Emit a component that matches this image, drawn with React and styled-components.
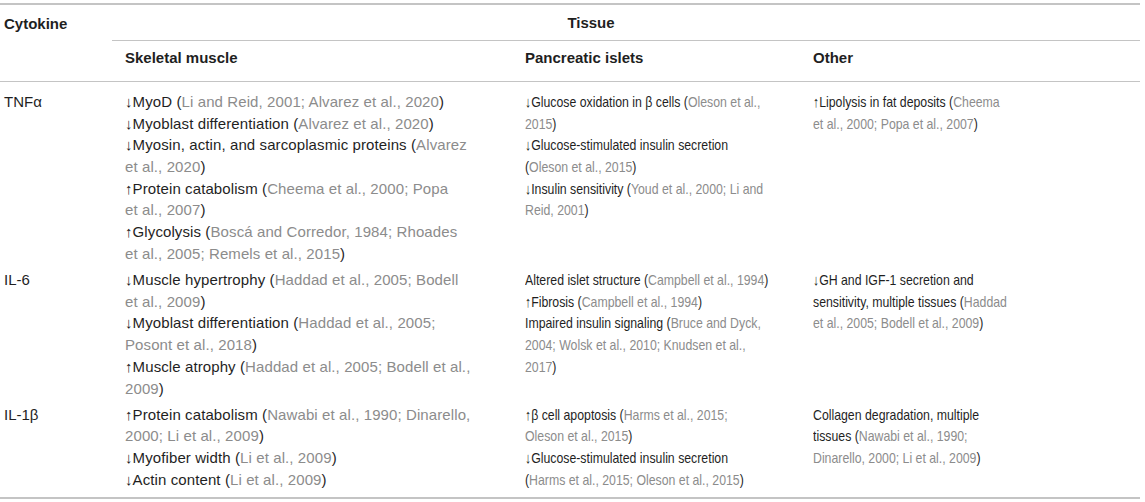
import React from 'react'
import styled, { createGlobalStyle } from 'styled-components'

const GlobalStyle = createGlobalStyle`
    html, body {
        margin: 0;
        padding: 0;
        background: #ffffff;
    }
    body {
        font-family: "Liberation Sans", Arial, sans-serif;
    }
`;

const rows = [
    {
        cytokine: 'TNFα',
        cells: [
            [
                '↓MyoD ([Li and Reid, 2001; Alvarez et al., 2020])',
                '↓Myoblast differentiation ([Alvarez et al., 2020])',
                '↓Myosin, actin, and sarcoplasmic proteins ([Alvarez\net al., 2020])',
                '↑Protein catabolism ([Cheema et al., 2000; Popa\net al., 2007])',
                '↑Glycolysis ([Boscá and Corredor, 1984; Rhoades\net al., 2005; Remels et al., 2015])',
            ],
            [
                '↓Glucose oxidation in β cells ([Oleson et al.,\n2015])',
                '↓Glucose-stimulated insulin secretion\n([Oleson et al., 2015])',
                '↓Insulin sensitivity ([Youd et al., 2000; Li and\nReid, 2001])',
            ],
            [
                '↑Lipolysis in fat deposits ([Cheema\net al., 2000; Popa et al., 2007])',
            ],
        ],
    },
    {
        cytokine: 'IL-6',
        cells: [
            [
                '↓Muscle hypertrophy ([Haddad et al., 2005; Bodell\net al., 2009])',
                '↓Myoblast differentiation ([Haddad et al., 2005;\nPosont et al., 2018])',
                '↑Muscle atrophy ([Haddad et al., 2005; Bodell et al.,\n2009])',
            ],
            [
                'Altered islet structure ([Campbell et al., 1994])',
                '↑Fibrosis ([Campbell et al., 1994])',
                'Impaired insulin signaling ([Bruce and Dyck,\n2004; Wolsk et al., 2010; Knudsen et al.,\n2017])',
            ],
            [
                '↓GH and IGF-1 secretion and\nsensitivity, multiple tissues ([Haddad\net al., 2005; Bodell et al., 2009])',
            ],
        ],
    },
    {
        cytokine: 'IL-1β',
        cells: [
            [
                '↑Protein catabolism ([Nawabi et al., 1990; Dinarello,\n2000; Li et al., 2009])',
                '↓Myofiber width ([Li et al., 2009])',
                '↓Actin content ([Li et al., 2009])',
            ],
            [
                '↑β cell apoptosis ([Harms et al., 2015;\nOleson et al., 2015])',
                '↓Glucose-stimulated insulin secretion\n([Harms et al., 2015; Oleson et al., 2015])',
            ],
            [
                'Collagen degradation, multiple\ntissues ([Nawabi et al., 1990;\nDinarello, 2000; Li et al., 2009])',
            ],
        ],
    },
];

// "[...]" marks the citation part, shown in grey
function Entry({ text }) {
    const parts = text.split(/(\[[^\]]*\])/);
    return (
        <Line>
            {parts.map((p, i) =>
                p.startsWith('[') ? <Ref key={i}>{p.slice(1, -1)}</Ref> : <span key={i}>{p}</span>
            )}
        </Line>
    );
}

function App() {
    return (
        <>
        <GlobalStyle />
        <Table>
            <Head>
                <CytokineHead>Cytokine</CytokineHead>
                <TissueHead>Tissue</TissueHead>
                <SubHead>Skeletal muscle</SubHead>
                <SubHead>Pancreatic islets</SubHead>
                <SubHead>Other</SubHead>
            </Head>
            <Body>
                {rows.map((row) => (
                    <Row key={row.cytokine}>
                        <NameCell>{row.cytokine}</NameCell>
                        {row.cells.map((entries, i) => (
                            <Cell key={i}>
                                <Entries $narrow={i > 0}>
                                    {entries.map((e, j) => <Entry key={j} text={e} />)}
                                </Entries>
                            </Cell>
                        ))}
                    </Row>
                ))}
            </Body>
        </Table>
        </>
    );
}

export default App

const columns = '112px 400px 288px 340px';

const Table = styled.div`
    width: 1140px;
    margin-top: 3px;
    border-top: 2px solid #c4c4c4;
    border-bottom: 2px solid #c4c4c4;
    font-size: 15px;
    line-height: 21.7px;
    color: #1f1f1f;
`;

const Head = styled.div`
    display: grid;
    grid-template-columns: ${columns};
    border-bottom: 1px solid #c4c4c4;
    font-weight: bold;
`;

const CytokineHead = styled.div`
    grid-row: 1 / span 2;
    padding: 8px 0 0 4px;
`;

const TissueHead = styled.div`
    grid-column: 2 / span 3;
    text-align: center;
    padding: 7px 70px 6px 0;
    border-bottom: 1px solid #c4c4c4;
`;

const SubHead = styled.div`
    padding: 6px 0 13px 13px;
`;

const Body = styled.div`
    padding: 4px 0 6px;
`;

const Row = styled.div`
    display: grid;
    grid-template-columns: ${columns};
    padding-top: 4.5px;
`;

const NameCell = styled.div`
    padding-left: 4px;
`;

const Cell = styled.div`
    padding-left: 13px;
`;

/* the two right-hand columns are set in a condensed face in the source */
const Entries = styled.div`
    white-space: pre;
    letter-spacing: ${(p) => (p.$narrow ? '0' : '0.1px')};
    transform-origin: left top;
    transform: ${(p) => (p.$narrow ? 'scaleX(0.82)' : 'none')};
`;

const Line = styled.div``;

const Ref = styled.span`
    color: #8c8c8c;
`;
